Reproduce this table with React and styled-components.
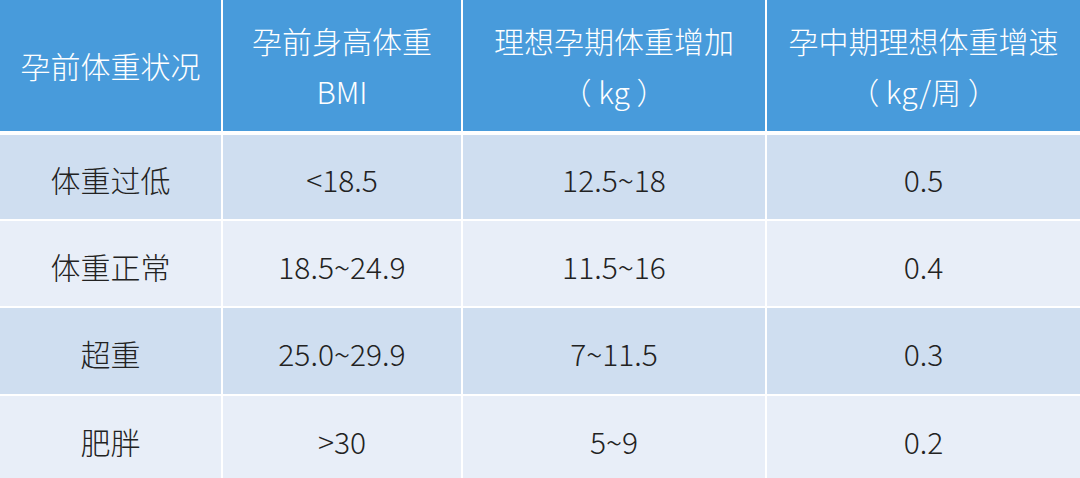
import React from "react";
import styled, { createGlobalStyle } from "styled-components";

const GlobalStyle = createGlobalStyle`
  html, body {
    margin: 0;
    padding: 0;
    background: #ffffff;
  }
  body {
    width: 1080px;
    height: 478px;
    overflow: hidden;
    font-family: "Noto Sans CJK SC", "Noto Sans", sans-serif;
  }
`;

const Table = styled.div`
  width: 1080px;
  display: flex;
  flex-direction: column;
  background: #ffffff;
`;

const Grid = styled.div`
  display: grid;
  grid-template-columns: 221px 238px 302px 1fr;
  column-gap: 2px;
  row-gap: 2px;
`;

const HeaderGrid = styled(Grid)`
  margin-bottom: 4px;
`;

const HeaderCell = styled.div`
  height: 131px;
  background: #489bdb;
  color: #ffffff;
  display: flex;
  flex-direction: column;
  align-items: center;
  justify-content: center;
  font-size: 30px;
  font-weight: 300;
  line-height: 51px;
  padding-top: 0;
  box-sizing: border-box;
  white-space: nowrap;
`;

const BodyCell = styled.div`
  height: ${(p) => p.$h}px;
  background: ${(p) => (p.$odd ? "#cfdef0" : "#e8eef8")};
  color: #222222;
  display: flex;
  align-items: center;
  justify-content: center;
  font-size: 30px;
  font-weight: 300;
  padding-top: 4px;
  box-sizing: border-box;
  white-space: nowrap;
`;

const headers = [
  ["孕前体重状况"],
  ["孕前身高体重", "BMI"],
  ["理想孕期体重增加", "（ kg ）"],
  ["孕中期理想体重增速", "（ kg/周 ）"],
];

const rows = [
  { h: 84, cells: ["体重过低", "<18.5", "12.5~18", "0.5"] },
  { h: 85, cells: ["体重正常", "18.5~24.9", "11.5~16", "0.4"] },
  { h: 86, cells: ["超重", "25.0~29.9", "7~11.5", "0.3"] },
  { h: 86, cells: ["肥胖", ">30", "5~9", "0.2"] },
];

export default function App() {
  return (
    <>
      <GlobalStyle />
      <Table>
        <HeaderGrid>
          {headers.map((lines, i) => (
            <HeaderCell key={i}>
              {lines.map((l, j) => (
                <span key={j}>{l}</span>
              ))}
            </HeaderCell>
          ))}
        </HeaderGrid>
        <Grid>
          {rows.map((r, ri) =>
            r.cells.map((c, ci) => (
              <BodyCell key={`${ri}-${ci}`} $h={r.h} $odd={ri % 2 === 0}>
                {c}
              </BodyCell>
            ))
          )}
        </Grid>
      </Table>
    </>
  );
}
